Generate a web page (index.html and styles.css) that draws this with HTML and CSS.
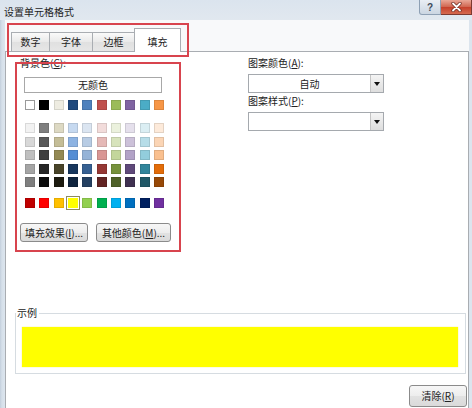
FILE: index.html
```html
<!DOCTYPE html>
<html lang="zh-CN">
<head>
<meta charset="utf-8">
<title>设置单元格格式</title>
<link rel="stylesheet" href="styles.css">
</head>
<body>
<div class="win">
  <div class="titlebar">
    <span class="title">设置单元格格式</span>
    <div class="caption">
      <span class="cap-btn help">?</span>
      <span class="cap-btn close"><svg width="11" height="10" viewBox="0 0 11 10"><path d="M2 1.5 L9 8.5 M9 1.5 L2 8.5" stroke="#6b2a20" stroke-width="3.2" stroke-linecap="round"/><path d="M2 1.5 L9 8.5 M9 1.5 L2 8.5" stroke="#fff" stroke-width="1.8" stroke-linecap="round"/></svg></span>
    </div>
  </div>
  <div class="client">
    <div class="tabs">
      <div class="tab t1">数字</div>
      <div class="tab t2">字体</div>
      <div class="tab t3">边框</div>
      <div class="tab t4 active">填充</div>
    </div>
    <div class="panel">
      <div class="cols">
        <div class="left">
          <div class="label">背景色(<u>C</u>):</div>
          <div class="nocolor">无颜色</div>
          <div class="swatches theme">
            <span class="sw white" style="background:#ffffff"></span>
            <span class="sw" style="background:#000000"></span>
            <span class="sw" style="background:#eeece1"></span>
            <span class="sw" style="background:#1f497d"></span>
            <span class="sw" style="background:#4f81bd"></span>
            <span class="sw" style="background:#c0504d"></span>
            <span class="sw" style="background:#9bbb59"></span>
            <span class="sw" style="background:#8064a2"></span>
            <span class="sw" style="background:#4bacc6"></span>
            <span class="sw" style="background:#f79646"></span>
          </div>
          <div class="swatches tints">
            <span class="sw" style="background:#f2f2f2"></span>
            <span class="sw" style="background:#7f7f7f"></span>
            <span class="sw" style="background:#ddd9c3"></span>
            <span class="sw" style="background:#c6d9f0"></span>
            <span class="sw" style="background:#dbe5f1"></span>
            <span class="sw" style="background:#f2dcdb"></span>
            <span class="sw" style="background:#ebf1dd"></span>
            <span class="sw" style="background:#e5e0ec"></span>
            <span class="sw" style="background:#dbeef3"></span>
            <span class="sw" style="background:#fdeada"></span>

            <span class="sw" style="background:#d8d8d8"></span>
            <span class="sw" style="background:#595959"></span>
            <span class="sw" style="background:#c4bd97"></span>
            <span class="sw" style="background:#8db3e2"></span>
            <span class="sw" style="background:#b8cce4"></span>
            <span class="sw" style="background:#e5b9b7"></span>
            <span class="sw" style="background:#d7e3bc"></span>
            <span class="sw" style="background:#ccc1d9"></span>
            <span class="sw" style="background:#b7dde8"></span>
            <span class="sw" style="background:#fbd5b5"></span>

            <span class="sw" style="background:#bfbfbf"></span>
            <span class="sw" style="background:#3f3f3f"></span>
            <span class="sw" style="background:#938953"></span>
            <span class="sw" style="background:#548dd4"></span>
            <span class="sw" style="background:#95b3d7"></span>
            <span class="sw" style="background:#d99694"></span>
            <span class="sw" style="background:#c3d69b"></span>
            <span class="sw" style="background:#b2a2c7"></span>
            <span class="sw" style="background:#92cddc"></span>
            <span class="sw" style="background:#fac08f"></span>

            <span class="sw" style="background:#a5a5a5"></span>
            <span class="sw" style="background:#262626"></span>
            <span class="sw" style="background:#494429"></span>
            <span class="sw" style="background:#17365d"></span>
            <span class="sw" style="background:#366092"></span>
            <span class="sw" style="background:#953734"></span>
            <span class="sw" style="background:#76923c"></span>
            <span class="sw" style="background:#5f497a"></span>
            <span class="sw" style="background:#31859b"></span>
            <span class="sw" style="background:#e36c09"></span>

            <span class="sw" style="background:#7f7f7f"></span>
            <span class="sw" style="background:#0c0c0c"></span>
            <span class="sw" style="background:#1d1b10"></span>
            <span class="sw" style="background:#0f243e"></span>
            <span class="sw" style="background:#244061"></span>
            <span class="sw" style="background:#632423"></span>
            <span class="sw" style="background:#4f6128"></span>
            <span class="sw" style="background:#3f3151"></span>
            <span class="sw" style="background:#205867"></span>
            <span class="sw" style="background:#974806"></span>
          </div>
          <div class="swatches std">
            <span class="sw" style="background:#c00000"></span>
            <span class="sw" style="background:#ff0000"></span>
            <span class="sw" style="background:#ffc000"></span>
            <span class="sw selected" style="background:#ffff00"></span>
            <span class="sw" style="background:#92d050"></span>
            <span class="sw" style="background:#00b050"></span>
            <span class="sw" style="background:#00b0f0"></span>
            <span class="sw" style="background:#0070c0"></span>
            <span class="sw" style="background:#002060"></span>
            <span class="sw" style="background:#7030a0"></span>
          </div>
          <div class="btn-row">
            <div class="btn fill-fx">填充效果(<u>I</u>)...</div>
            <div class="btn more">其他颜色(<u>M</u>)...</div>
          </div>
        </div>
        <div class="right">
          <div class="label">图案颜色(<u>A</u>):</div>
          <div class="combo"><span class="combo-text">自动</span><span class="combo-arrow"></span></div>
          <div class="label label2">图案样式(<u>P</u>):</div>
          <div class="combo combo2"><span class="combo-text"></span><span class="combo-arrow"></span></div>
        </div>
      </div>
      <fieldset class="sample">
        <legend>示例</legend>
        <div class="preview"></div>
      </fieldset>
      <div class="foot"><div class="btn clear">清除(<u>R</u>)</div></div>
    </div>
  </div>
  <div class="mark mark-tabs"></div>
  <div class="mark mark-bg"></div>
</div>
</body>
</html>
```

FILE: styles.css
```css
* { box-sizing: border-box; }
html, body { margin: 0; padding: 0; }
body {
  width: 472px;
  height: 408px;
  overflow: hidden;
  font-family: "Noto Sans CJK SC", "Microsoft YaHei", sans-serif;
  font-size: 10px;
  color: #222;
  background: #d9e3ed;
}
u { text-decoration: underline; text-underline-offset: 1px; }

.win {
  position: relative;
  width: 472px;
  height: 408px;
  overflow: hidden;
  background: linear-gradient(90deg, #c3cfdc 0, #d6e0ea 2px, #dce5ee 5px);
}

/* title bar */
.titlebar {
  height: 20px;
  display: flex;
  align-items: flex-start;
  background: linear-gradient(#dbe4ee, #e1e8ef);
}
.title {
  margin-top: 6px;
  padding-left: 4px;
  line-height: 12px;
  color: #1e1e1e;
}
.caption { margin-left: auto; display: flex; }
.cap-btn {
  height: 15px;
  display: flex;
  align-items: center;
  justify-content: center;
}
.help {
  width: 22px;
  border: 1px solid #8ea0b4;
  border-top: none;
  border-radius: 0 0 0 3px;
  background: linear-gradient(#e9eef4, #cbd6e2);
  color: #3d4a5a;
  font-family: "Liberation Sans", sans-serif;
  font-size: 10px;
  font-weight: bold;
}
.close {
  width: 31px;
  border: 1px solid #7d3a30;
  border-top: none;
  border-left: none;
  background: linear-gradient(#e9a797, #d0654f 50%, #c5402b 51%, #d56a4f);
}

/* client area */
.client {
  margin: 0 3px 0 5px;
  height: 388px;
  background: #f8f9fa;
  padding-top: 8px;
}
.tabs {
  display: flex;
  align-items: flex-end;
  height: 23px;
  padding-left: 6px;
}
.tab {
  height: 19px;
  line-height: 18px;
  border: 1px solid #a9adb2;
  border-bottom: none;
  background: linear-gradient(#fafafa, #e9e9e9 50%, #e0e0e0 51%, #e6e6e6);
  text-align: center;
  margin-right: -1px;
  color: #222;
}
.t1 { width: 39px; }
.t2 { width: 44px; }
.t3 { width: 43px; }
.t4 { width: 47px; }
.tab.active {
  position: relative;
  z-index: 1;
  height: 24px;
  margin-bottom: -1px;
  padding-top: 2px;
  line-height: 22px;
  background: #fff;
}

.panel {
  background: #fff;
  border: 1px solid #a9adb2;
  height: 358px;
}
.cols {
  display: flex;
  padding-left: 14px;
}
.left { width: 228px; }
.right { width: 136px; }

.label {
  margin-top: 5px;
  line-height: 12px;
  color: #222;
}
.nocolor {
  margin: 8px 0 0 4px;
  width: 138px;
  height: 16px;
  line-height: 14px;
  border: 1px solid #a8a8a8;
  background: #fff;
  text-align: center;
}

.swatches {
  display: grid;
  grid-template-columns: repeat(10, 10px);
  column-gap: 4.33px;
  margin-left: 5px;
}
.theme { margin-top: 7px; }
.tints { margin-top: 13px; row-gap: 3.5px; }
.std { margin-top: 11px; }
.sw {
  display: block;
  width: 10px;
  height: 10px;
  box-shadow: inset 0 0 0 1px rgba(0, 0, 0, 0.1);
}
.sw.white { box-shadow: inset 0 0 0 1px #9a9a9a; }
.sw.selected {
  box-shadow: 0 0 0 1px #fff, 0 0 0 2px #8c8a62;
}

.btn-row {
  display: flex;
  gap: 8px;
  margin-top: 15px;
}
.btn {
  height: 19px;
  line-height: 17px;
  border: 1px solid #8b8b8b;
  border-radius: 3px;
  background: linear-gradient(#f7f7f7, #ededed 50%, #e2e2e2 51%, #dadada);
  text-align: center;
  color: #222;
}
.fill-fx { width: 68px; }
.more { width: 75px; }

.combo {
  margin-top: 5px;
  height: 19px;
  display: flex;
  border: 1px solid #a5a9ae;
  background: #fff;
}
.combo-text {
  flex: 1;
  text-align: center;
  line-height: 17px;
}
.combo-arrow {
  width: 13px;
  border-left: 1px solid #c4c4c4;
  background: linear-gradient(#f4f4f4, #dedede);
  display: flex;
  align-items: center;
  justify-content: center;
}
.combo-arrow::after {
  content: "";
  border-left: 3px solid transparent;
  border-right: 3px solid transparent;
  border-top: 4px solid #111;
  margin-top: 1px;
}
.label2 { margin-top: 2px; }

/* sample group */
.sample {
  margin: 65px 2px 0 9px;
  padding: 8px 7px 6px 6px;
  border: 1px solid #d6dce1;
  min-width: 0;
}
.sample legend {
  padding: 0 2px 0 1px;
  margin-left: -6px;
  line-height: 12px;
  color: #222;
}
.preview {
  height: 40px;
  background: #ffff00;
  box-shadow: 0 0 1px 0 #f4e45a;
}

.foot {
  display: flex;
  justify-content: flex-end;
  margin-top: 11px;
  padding-right: 1px;
}
.clear {
  width: 58px;
  height: 22px;
  line-height: 20px;
}

/* red annotation boxes */
.mark {
  position: absolute;
  border: 2px solid #d8444e;
  pointer-events: none;
  z-index: 5;
}
.mark-tabs { left: 7px; top: 23px; width: 182px; height: 34px; }
.mark-bg { left: 15px; top: 62px; width: 166px; height: 190px; }
```
